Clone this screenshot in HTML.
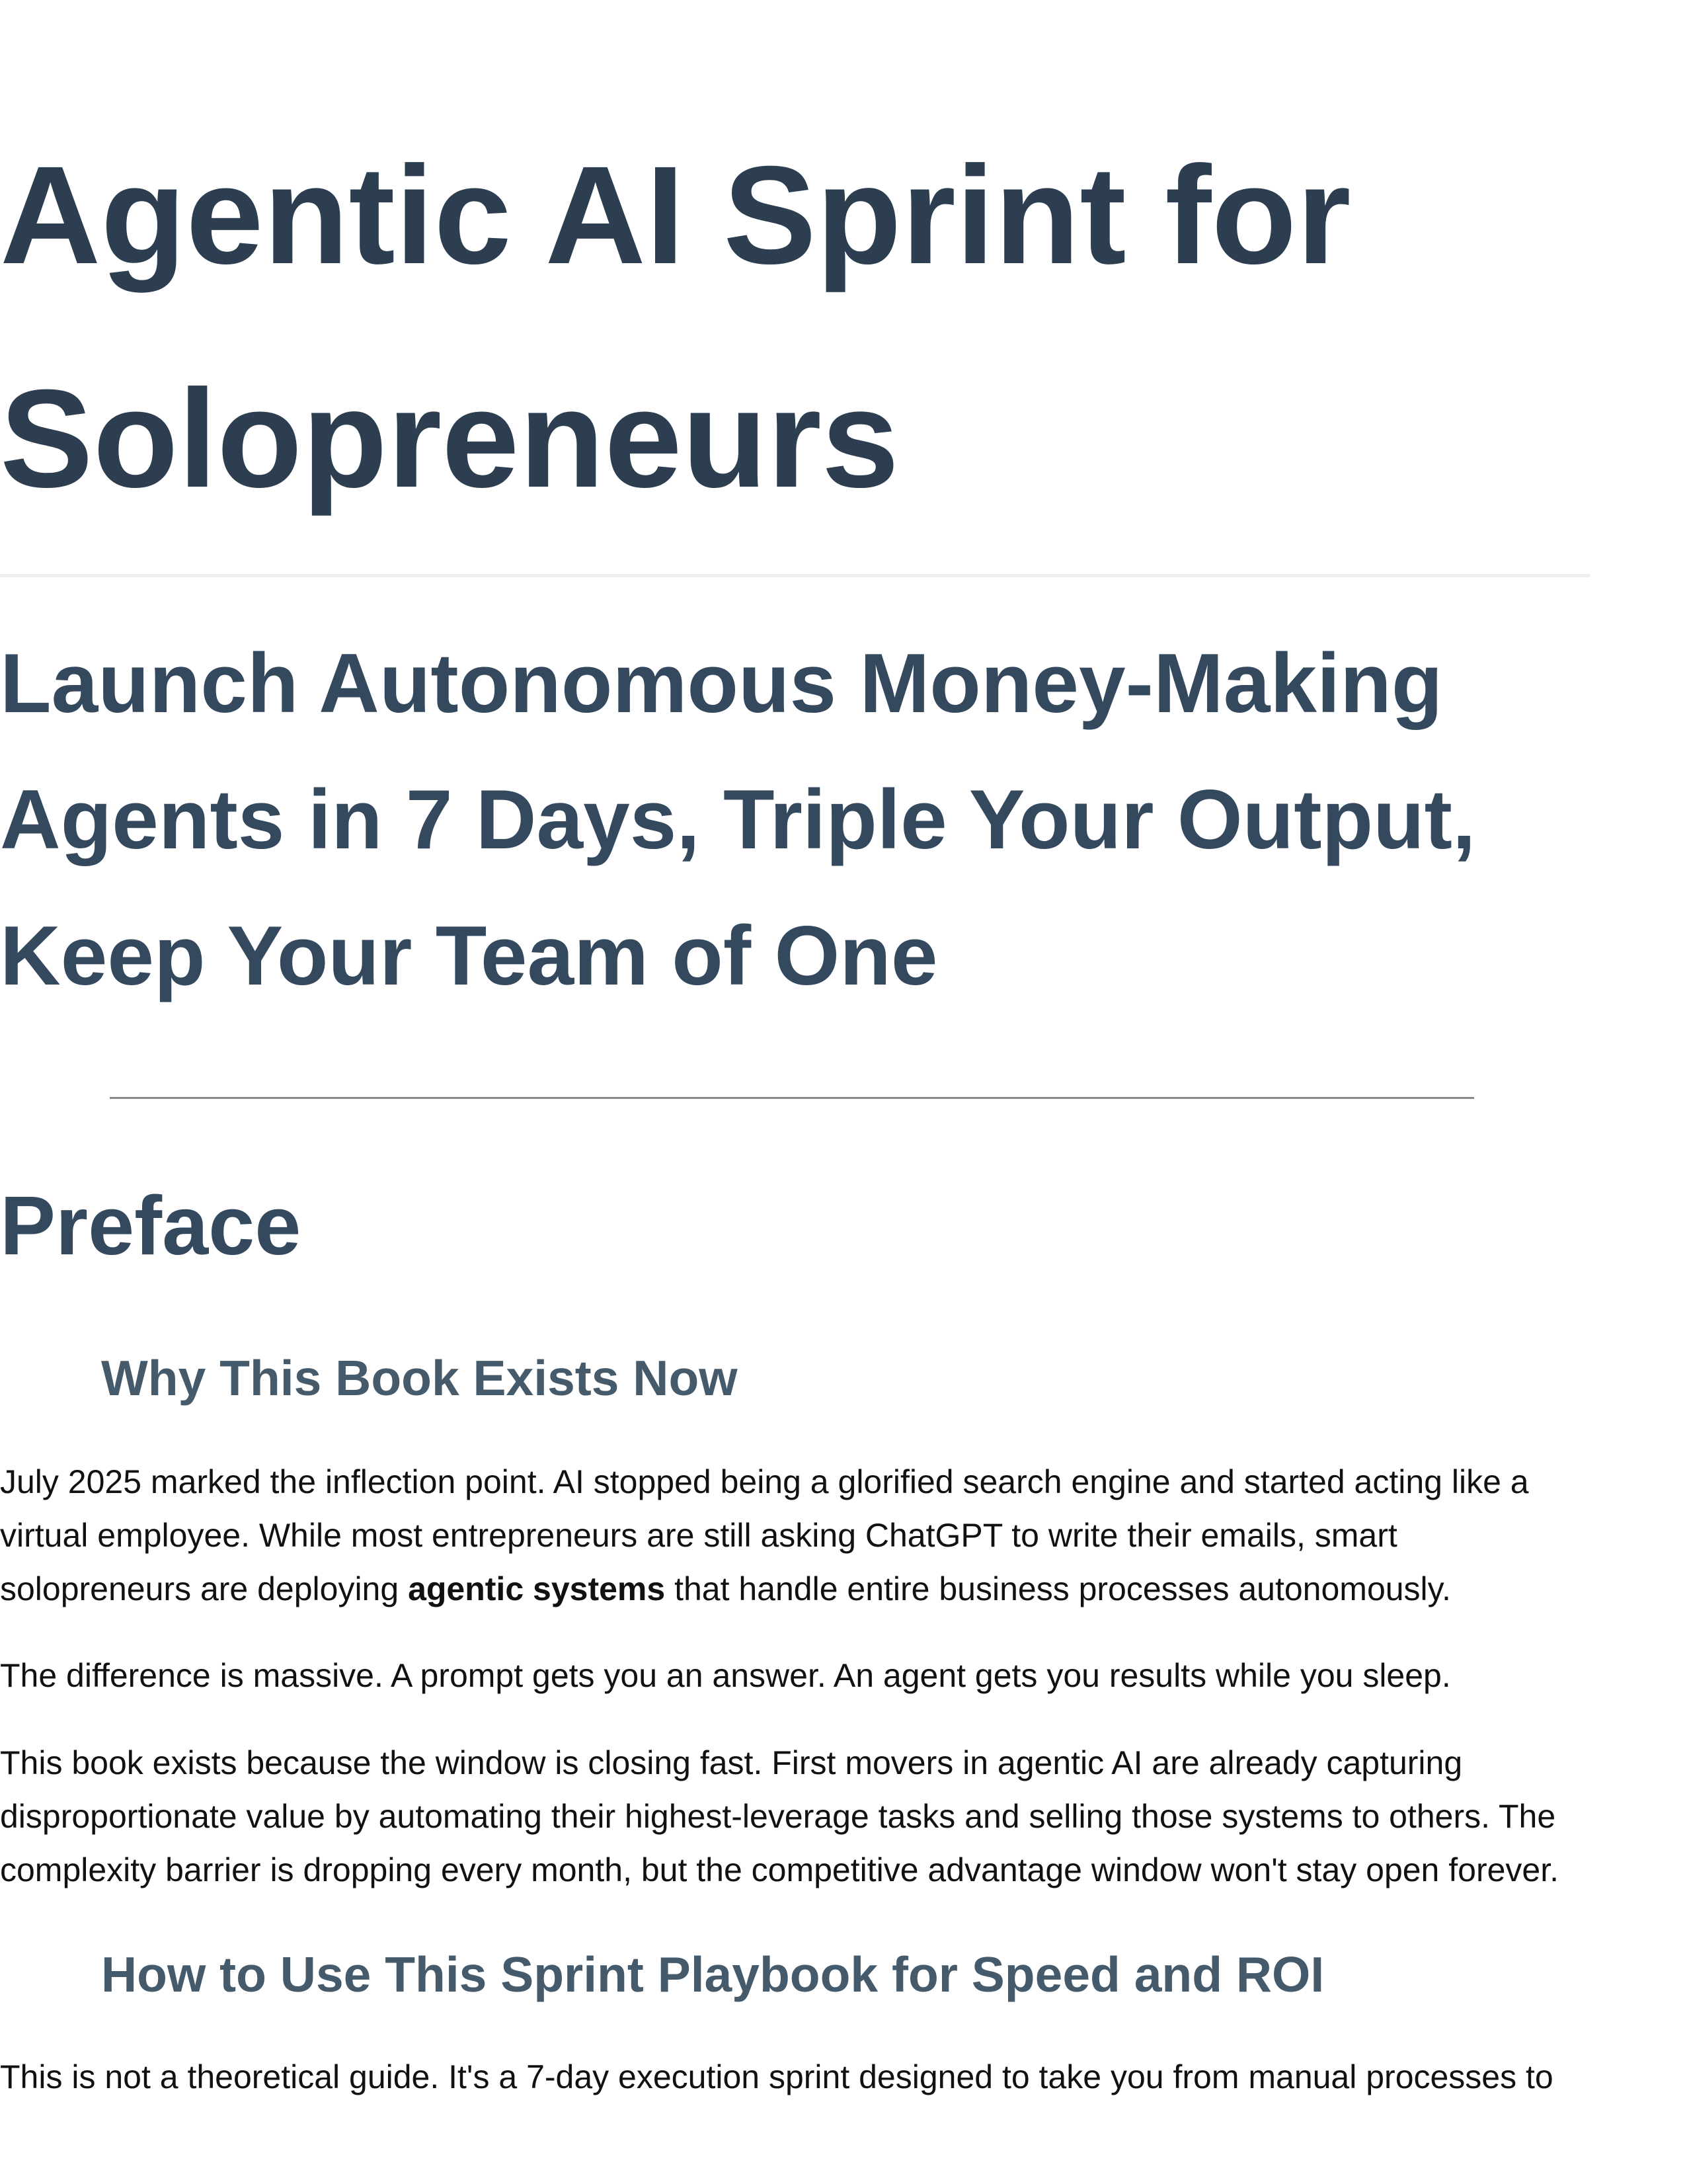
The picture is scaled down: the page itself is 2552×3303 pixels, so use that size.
<!DOCTYPE html>
<html><head><meta charset="utf-8"><style>
html,body{margin:0;padding:0;background:#fff;}
body{width:2552px;height:3303px;position:relative;overflow:hidden;font-family:"Liberation Sans",Arial,sans-serif;}
.a{position:absolute;left:0;white-space:nowrap;margin:0;}
.t{font-size:211px;line-height:338px;font-weight:bold;color:#2c3e50;top:156px;}
.s{font-size:127px;line-height:206px;font-weight:bold;color:#34495e;top:930px;}
.p{font-size:126px;line-height:150px;font-weight:bold;color:#34495e;top:1779px;}
.h{font-size:75px;line-height:100px;font-weight:bold;color:#455a6b;left:153px;}
.b{font-size:50px;line-height:81px;color:#111;}
</style></head><body>
<div class="a t">Agentic AI Sprint for<br>Solopreneurs</div>
<div style="position:absolute;left:0;top:868px;width:2405px;height:5px;background:#eeeeee"></div>
<div class="a s">Launch Autonomous Money-Making<br>Agents in 7 Days, Triple Your Output,<br>Keep Your Team of One</div>
<div style="position:absolute;left:166px;top:1659px;width:2064px;height:3px;background:#888"></div>
<div class="a p">Preface</div>
<div class="a h" style="top:2034px">Why This Book Exists Now</div>
<div class="a b" style="top:2201px">July 2025 marked the inflection point. AI stopped being a glorified search engine and started acting like a<br>virtual employee. While most entrepreneurs are still asking ChatGPT to write their emails, smart<br>solopreneurs are deploying <b>agentic systems</b> that handle entire business processes autonomously.</div>
<div class="a b" style="top:2494px">The difference is massive. A prompt gets you an answer. An agent gets you results while you sleep.</div>
<div class="a b" style="top:2626px">This book exists because the window is closing fast. First movers in agentic AI are already capturing<br>disproportionate value by automating their highest-leverage tasks and selling those systems to others. The<br>complexity barrier is dropping every month, but the competitive advantage window won't stay open forever.</div>
<div class="a h" style="top:2936px">How to Use This Sprint Playbook for Speed and ROI</div>
<div class="a b" style="top:3101px">This is not a theoretical guide. It's a 7-day execution sprint designed to take you from manual processes to</div>
</body></html>
